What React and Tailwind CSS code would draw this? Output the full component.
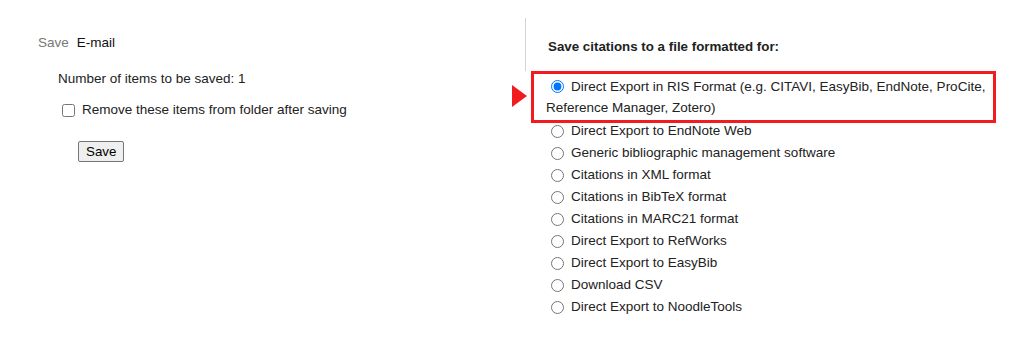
import { useState } from "react";

const formats = [
  "Direct Export to EndNote Web",
  "Generic bibliographic management software",
  "Citations in XML format",
  "Citations in BibTeX format",
  "Citations in MARC21 format",
  "Direct Export to RefWorks",
  "Direct Export to EasyBib",
  "Download CSV",
  "Direct Export to NoodleTools",
];

function App() {
  const [selected, setSelected] = useState("ris");

  return (
    <div className="w-[1016px] h-[340px] bg-white flex text-[13.5px] text-[#222] font-['Liberation_Sans',Arial,sans-serif]">
      {/* left: save / e-mail */}
      <div className="w-[525px] pt-[35px] pl-[38px]">
        <div className="flex gap-[8px] leading-[16px]">
          <span className="text-[#777]">Save</span>
          <span className="text-[#111]">E-mail</span>
        </div>
        <p className="mt-[20px] pl-[20px] leading-[16px]">Number of items to be saved: 1</p>
        <label className="flex items-center h-[16px] mt-[15px] pl-[24px]">
          <input type="checkbox" className="m-0 mr-[7px] w-[13px] h-[13px]" />
          Remove these items from folder after saving
        </label>
        <div className="mt-[23px] pl-[40px]">
          <button className="h-[21px] px-[7px] bg-[#efefef] border border-[#767676] rounded-[2px] text-[13.33px] leading-[19px] text-black">
            Save
          </button>
        </div>
      </div>

      {/* right: citation formats */}
      <div className="flex-1">
        <div className="mt-[18px] h-[53px] border-l border-[#d4d4d4] pl-[22px] pt-[21px]">
          <h3 className="font-bold text-[13.33px] leading-[16px] text-[#222]">Save citations to a file formatted for:</h3>
        </div>

        <div className="relative ml-[6px] w-[465px] border-[3px] border-[#f21b20] pl-[12px] pt-[2px] pb-[2px] leading-[21px]">
          <div className="absolute left-[-22px] top-[11px] w-0 h-0 border-y-[11px] border-y-transparent border-l-[15px] border-l-[#f21b20]" />
          <label>
            <input
              type="radio"
              name="fmt"
              className="w-[13px] h-[13px] align-[-2px] m-0 ml-[5px] mr-[7px]"
              checked={selected === "ris"}
              onChange={() => setSelected("ris")}
            />
            Direct Export in RIS Format (e.g. CITAVI, EasyBib, EndNote, ProCite, Reference Manager, Zotero)
          </label>
        </div>

        <div className="pl-[21px] flex flex-col">
          {formats.map((f) => (
            <label key={f} className="flex items-center h-[22px] whitespace-nowrap first:-mt-[3px]">
              <input
                type="radio"
                name="fmt"
                className="w-[13px] h-[13px] m-0 ml-[5px] mr-[7px]"
                checked={selected === f}
                onChange={() => setSelected(f)}
              />
              {f}
            </label>
          ))}
        </div>
      </div>
    </div>
  );
}

export default App;
